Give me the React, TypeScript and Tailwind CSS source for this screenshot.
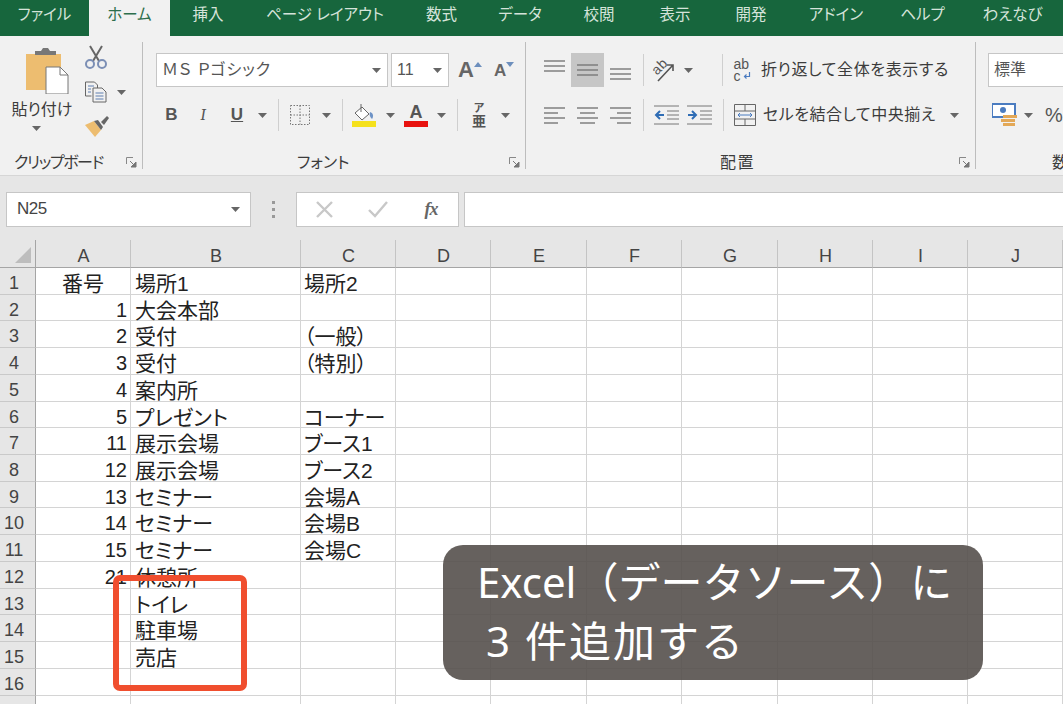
import React from 'react';

const FONT = '"Liberation Sans", "Noto Sans CJK JP", sans-serif';

const TABS = [
  { name: 'ファイル', w: 'w-[89px]' },
  { name: 'ホーム', w: 'w-[81px]', active: true },
  { name: '挿入', w: 'w-[76px]' },
  { name: 'ページ レイアウト', w: 'w-[158px]' },
  { name: '数式', w: 'w-[75px]' },
  { name: 'データ', w: 'w-[82px]' },
  { name: '校閲', w: 'w-[76px]' },
  { name: '表示', w: 'w-[76px]' },
  { name: '開発', w: 'w-[76px]' },
  { name: 'アドイン', w: 'w-[94px]' },
  { name: 'ヘルプ', w: 'w-[79px]' },
  { name: 'わえなび', w: 'w-[101px]' },
];

const COLS = ['A', 'B', 'C', 'D', 'E', 'F', 'G', 'H', 'I', 'J'];

const ROWS: [string, string, string][] = [
  ['番号', '場所1', '場所2'],
  ['1', '大会本部', ''],
  ['2', '受付', '（一般）'],
  ['3', '受付', '（特別）'],
  ['4', '案内所', ''],
  ['5', 'プレゼント', 'コーナー'],
  ['11', '展示会場', 'ブース1'],
  ['12', '展示会場', 'ブース2'],
  ['13', 'セミナー', '会場A'],
  ['14', 'セミナー', '会場B'],
  ['15', 'セミナー', '会場C'],
  ['21', '休憩所', ''],
  ['', 'トイレ', ''],
  ['', '駐車場', ''],
  ['', '売店', ''],
  ['', '', ''],
  ['', '', ''],
];

const Arrow = () => (
  <svg width="9" height="5" viewBox="0 0 9 5"><path d="M0 0h9L4.5 5z" fill="#666" /></svg>
);

const Launcher = () => (
  <svg width="11" height="11" viewBox="0 0 11 11" fill="none">
    <path d="M.5 7V.5H7" stroke="#888" />
    <path d="M4 4l5 5M10 5v5H5z" stroke="#777" fill="#777" />
  </svg>
);

const Lines = ({ rows }: { rows: [number, number, number][] }) => (
  <svg width="22" height="22" viewBox="0 0 22 22">
    {rows.map(([x1, x2, y]) => (
      <path key={`${x1}-${y}`} d={`M${x1} ${y}H${x2}`} stroke="#777" strokeWidth="1.4" />
    ))}
  </svg>
);

const Sep = () => <div className="w-px h-[32px] bg-[#cfcfcf]" />;

const Cell = ({ w, children }: { w: string; children?: React.ReactNode }) => (
  <div className={`${w} h-full flex items-center justify-center shrink-0`}>{children}</div>
);

const RibbonDivider = () => <div className="w-px h-[127px] mt-[6px] bg-[#bdbdbd] shrink-0" />;

const Group = ({ w, label, labelPad, launcher, children }: { w: string; label: string; labelPad: string; launcher?: boolean; children: React.ReactNode }) => (
  <div className={`${w} h-full flex flex-col shrink-0 overflow-hidden`}>
    <div className="h-[114px]">{children}</div>
    <div className="h-[25px] flex items-center text-[16px] leading-none text-[#3c3c3c]">
      <span className={`${labelPad} whitespace-nowrap`}>{label}</span>
      {launcher && <span className="ml-auto mr-[5px] flex"><Launcher /></span>}
    </div>
  </div>
);

const Combo = ({ w, text, className }: { w: string; text: string; className?: string }) => (
  <div className={`${w} h-[34px] bg-white border border-[#c6c6c6] flex items-center justify-between pl-[5px] pr-[6px] text-[#555] shrink-0 ${className ?? ''}`}>
    <span className="whitespace-nowrap">{text}</span>
    <Arrow />
  </div>
);

const PasteIcon = () => (
  <svg width="44" height="46" viewBox="0 0 44 46">
    <path d="M1 6h35v36H1z" fill="#edbd70" />
    <path d="M10 7V3h6l2-3h5l2 3h6v4z" fill="#777" />
    <path d="M21 19h14l8 8v19H21z" fill="#fff" stroke="#777" />
    <path d="M35 19v8h8" fill="none" stroke="#777" />
  </svg>
);

const CutIcon = () => (
  <svg width="24" height="24" viewBox="0 0 24 24" fill="none">
    <path d="M6 1l9 15M18 1L9 16" stroke="#666" strokeWidth="2" />
    <circle cx="6" cy="19" r="4" stroke="#7c8fb5" strokeWidth="2" />
    <circle cx="18" cy="19" r="4" stroke="#7c8fb5" strokeWidth="2" />
  </svg>
);

const CopyIcon = () => (
  <svg width="24" height="22" viewBox="0 0 24 22" fill="none" stroke="#666">
    <path d="M1.5 1h9l3 3v3M1.5 1v14h6" />
    <path d="M9 7h9l4 4v10H9z" fill="#f1f1f1" />
    <path d="M4 5h6M4 8h3M4 11h3M11.5 12h8M11.5 15h8M11.5 18h8" stroke="#5f7fb0" />
  </svg>
);

const BrushIcon = () => (
  <svg width="25" height="22" viewBox="0 0 25 22">
    <path d="M1 10l9-4 7 9-6 7z" fill="#edbd70" />
    <path d="M10 6l4-1 5 7-2 3z" fill="#666" />
    <path d="M17 7l6-6 2 2-5 7z" fill="#666" />
  </svg>
);

const FillIcon = () => (
  <svg width="24" height="24" viewBox="0 0 24 24">
    <path d="M3 10l7-6 7 7-7 6z" fill="#fff" stroke="#666" />
    <path d="M9 1v8" stroke="#666" />
    <path d="M18 9c3 1 4 4 2 7-2-2-3-4-2-7z" fill="#6e93c6" />
    <path d="M0 18h24v6H0z" fill="#f5e11d" />
  </svg>
);

const OrientIcon = () => (
  <svg className="overflow-visible" width="26" height="24" viewBox="0 0 26 24" fill="none">
    <text x="3" y="14" fontSize="14" fill="#555" transform="rotate(-45 10 10)" style={{ fontFamily: FONT }}>ab</text>
    <path d="M9 23L24 7M18 7h6v6" stroke="#555" strokeWidth="1.6" />
  </svg>
);

const WrapIcon = () => (
  <div className="flex flex-col text-[14px] leading-[12px] text-[#555] tracking-normal">
    <span>ab</span>
    <span className="flex items-center">
      c
      <svg className="ml-[2px]" width="8" height="8" viewBox="0 0 8 8" fill="none">
        <path d="M6.5 0v4.5H1.5M3.5 2.5l-2 2 2 2" stroke="#4b7cc0" strokeWidth="1.2" />
      </svg>
    </span>
  </div>
);

const MergeIcon = () => (
  <svg width="22" height="22" viewBox="0 0 22 22" fill="none">
    <path d="M.5.5h21v21H.5zM.5 7h21M.5 15h21M11 .5V7M11 15v6.5" stroke="#666" />
    <path d="M4 11h14" stroke="#4b7cc0" />
    <path d="M6 9l-2 2 2 2M16 9l2 2-2 2" stroke="#4b7cc0" />
  </svg>
);

const IndentIcon = ({ right }: { right?: boolean }) => (
  <svg width="25" height="20" viewBox="0 0 25 20" fill="none">
    <path d="M0 1h25M0 19h25M13 6h12M13 10h12M13 14h12" stroke="#777" />
    {right ? (
      <path d="M1 10h7M5 6l4 4-4 4" stroke="#2f6db5" strokeWidth="2" />
    ) : (
      <path d="M10 10H3M6 6l-4 4 4 4" stroke="#2f6db5" strokeWidth="2" />
    )}
  </svg>
);

const MoneyIcon = () => (
  <svg width="26" height="24" viewBox="0 0 26 24">
    <path d="M0 1h23v13H0z" fill="#fff" stroke="#4b7cc0" strokeWidth="2" />
    <circle cx="11" cy="7" r="3" fill="#4b7cc0" />
    <path d="M11 12h14v3H11zM9 16h14v3H9zM11 20h12v3H11z" fill="#e3a857" />
  </svg>
);

export default function App() {
  return (
    <div className="relative w-[1063px] h-[704px] overflow-hidden bg-white [font-feature-settings:'palt']" style={{ fontFamily: FONT }}>
      {/* Tabs */}
      <div className="flex h-[36px] bg-[#17663d]">
        {TABS.map(t => (
          <div
            key={t.name}
            className={`${t.w} shrink-0 flex items-center justify-center pb-[6px] text-[15.5px] whitespace-nowrap ${t.active ? 'bg-[#f1f1f1] text-[#2d6e4c]' : 'text-[#d5e3da]'}`}
          >
            {t.name}
          </div>
        ))}
      </div>

      {/* Ribbon */}
      <div className="flex h-[140px] bg-[#f1f1f1] border-b border-[#d6d6d6]">
        <Group w="w-[142px]" label="クリップボード" labelPad="pl-[14px] tracking-[-1.4px]" launcher>
          <div className="flex">
            <div className="w-[84px] flex flex-col items-center pt-[12px]">
              <div className="ml-[10px]"><PasteIcon /></div>
              <span className="text-[16px] leading-none mt-[8px] text-[#3c3c3c] whitespace-nowrap">貼り付け</span>
              <div className="mt-[8px] -ml-[12px] flex"><Arrow /></div>
            </div>
            <div className="flex flex-col pt-[9px] gap-[12px]">
              <CutIcon />
              <div className="flex items-center gap-[9px]"><CopyIcon /><Arrow /></div>
              <BrushIcon />
            </div>
          </div>
        </Group>
        <RibbonDivider />

        <Group w="w-[382px]" label="フォント" labelPad="pl-[154px]" launcher>
          <div className="flex items-center pt-[17px] pl-[13px] text-[16px]">
            <Combo w="w-[232px] tracking-[1px]" text="ＭＳ Ｐゴシック" />
            <Combo w="w-[58px]" text="11" className="ml-[3px]" />
            <span className="ml-[9px] text-[22px] leading-none font-bold text-[#666]">A</span>
            <svg className="mb-[12px]" width="8" height="5" viewBox="0 0 8 5"><path d="M0 5h8L4 0z" fill="#6d8fbd" /></svg>
            <span className="ml-[12px] text-[17px] leading-none font-bold text-[#666]">A</span>
            <svg className="mb-[12px]" width="8" height="5" viewBox="0 0 8 5"><path d="M0 0h8L4 5z" fill="#6d8fbd" /></svg>
          </div>
          <div className="flex items-center h-[34px] mt-[11px] pl-[13px] text-[#555]">
            <Cell w="w-[31px]"><b className="text-[17px]">B</b></Cell>
            <Cell w="w-[32px]"><i className="text-[17px] font-serif">I</i></Cell>
            <Cell w="w-[36px]"><b className="text-[17px] underline">U</b></Cell>
            <Cell w="w-[15px]"><Arrow /></Cell>
            <Cell w="w-[8px]" />
            <Sep />
            <Cell w="w-[42px]">
              <svg width="20" height="20" viewBox="0 0 20 20" fill="none" stroke="#777" strokeDasharray="1.5 1.5">
                <path d="M.5.5h19v19H.5zM.5 10h19M10 .5v19" />
              </svg>
            </Cell>
            <Cell w="w-[10px]"><Arrow /></Cell>
            <Cell w="w-[11px]" />
            <Sep />
            <Cell w="w-[41px]"><FillIcon /></Cell>
            <Cell w="w-[12px]"><Arrow /></Cell>
            <Cell w="w-[40px]">
              <div className="flex flex-col items-center w-[24px]">
                <b className="text-[18px] leading-[18px]">A</b>
                <div className="w-full h-[6px] bg-[#e8120f]" />
              </div>
            </Cell>
            <Cell w="w-[10px]"><Arrow /></Cell>
            <Cell w="w-[11px]" />
            <Sep />
            <Cell w="w-[42px]">
              <div className="flex flex-col items-center leading-none font-bold">
                <span className="text-[11px]">ア</span>
                <span className="text-[14px]">亜</span>
              </div>
            </Cell>
            <Cell w="w-[10px]"><Arrow /></Cell>
          </div>
        </Group>
        <RibbonDivider />

        <Group w="w-[449px]" label="配置" labelPad="pl-[194px] tracking-[1.5px]" launcher>
          <div className="flex items-center h-[34px] mt-[17px] pl-[18px] text-[16px] tracking-[0.6px] text-[#3c3c3c]">
            <Cell w="w-[22px]"><Lines rows={[[0, 21, 2], [0, 21, 7], [0, 21, 12]]} /></Cell>
            <Cell w="w-[5px]" />
            <Cell w="w-[33px]">
              <div className="w-full h-full bg-[#c6c6c6] flex items-center justify-center">
                <Lines rows={[[0, 21, 6], [0, 21, 11], [0, 21, 16]]} />
              </div>
            </Cell>
            <Cell w="w-[33px]"><Lines rows={[[0, 21, 10], [0, 21, 15], [0, 21, 20]]} /></Cell>
            <Cell w="w-[6px]" />
            <Sep />
            <Cell w="w-[36px]"><OrientIcon /></Cell>
            <Cell w="w-[16px]"><Arrow /></Cell>
            <Cell w="w-[26px]" />
            <Sep />
            <Cell w="w-[38px]"><WrapIcon /></Cell>
            <span className="whitespace-nowrap">折り返して全体を表示する</span>
          </div>
          <div className="flex items-center h-[34px] mt-[11px] pl-[18px] text-[16px] tracking-[0.5px] text-[#3c3c3c]">
            <Cell w="w-[22px]"><Lines rows={[[0, 21, 4], [0, 14, 9], [0, 21, 14], [0, 14, 19]]} /></Cell>
            <Cell w="w-[43px]"><Lines rows={[[0, 21, 4], [3, 18, 9], [0, 21, 14], [3, 18, 19]]} /></Cell>
            <Cell w="w-[23px]"><Lines rows={[[0, 21, 4], [7, 21, 9], [0, 21, 14], [7, 21, 19]]} /></Cell>
            <Cell w="w-[11px]" />
            <Sep />
            <Cell w="w-[10px]" />
            <IndentIcon />
            <Cell w="w-[8px]" />
            <IndentIcon right />
            <Cell w="w-[11px]" />
            <Sep />
            <Cell w="w-[10px]" />
            <MergeIcon />
            <Cell w="w-[7px]" />
            <span className="w-[187px] whitespace-nowrap">セルを結合して中央揃え</span>
            <Arrow />
          </div>
        </Group>
        <RibbonDivider />

        <Group w="w-[87px]" label="数" labelPad="pl-[76px]">
          <div className="h-[34px] mt-[17px] ml-[12px] pl-[5px] flex items-center bg-white border border-r-0 border-[#c6c6c6] text-[16px] text-[#555]">標準</div>
          <div className="flex items-center h-[34px] mt-[11px] pl-[16px]">
            <MoneyIcon />
            <Cell w="w-[20px]"><Arrow /></Cell>
            <span className="ml-[7px] text-[20px] text-[#555]">%</span>
          </div>
        </Group>
      </div>

      {/* Formula bar */}
      <div className="flex items-center h-[64px] pt-[2px] bg-[#e6e6e6]">
        <div className="ml-[6px] w-[245px] h-[35px] bg-white border border-[#c6c6c6] flex items-center justify-between pl-[10px] pr-[10px] text-[17px] text-[#444] shrink-0">
          <span className="tracking-[-0.5px]">N25</span>
          <Arrow />
        </div>
        <div className="w-[45px] flex flex-col items-center gap-[4px] shrink-0">
          <span className="w-[3px] h-[3px] bg-[#999]" />
          <span className="w-[3px] h-[3px] bg-[#999]" />
          <span className="w-[3px] h-[3px] bg-[#999]" />
        </div>
        <div className="w-[163px] h-[35px] bg-white border border-[#c6c6c6] flex items-center shrink-0">
          <Cell w="w-[54px]">
            <svg width="17" height="17" viewBox="0 0 17 17"><path d="M1 1l15 15M16 1L1 16" stroke="#c8c8c8" strokeWidth="2.4" /></svg>
          </Cell>
          <Cell w="w-[54px]">
            <svg width="20" height="17" viewBox="0 0 20 17" fill="none"><path d="M1 9l6 6L19 1" stroke="#c8c8c8" strokeWidth="2.4" /></svg>
          </Cell>
          <Cell w="w-[52px]"><i className="text-[18px] font-bold text-[#666] tracking-[-1px]" style={{ fontFamily: '"Liberation Serif", serif' }}>fx</i></Cell>
        </div>
        <div className="ml-[5px] flex-1 h-[35px] bg-white border border-r-0 border-[#c6c6c6]" />
      </div>

      {/* Sheet */}
      <div className="grid grid-cols-[36px_95px_170px_95px_95px_96px_95px_96px_95px_95px_95px] grid-rows-[28px] auto-rows-[26.72px] text-[21px] leading-[31px] text-[#222]">
        <div className="bg-[#e6e6e6] border-r border-b border-[#a5a5a5] flex items-end justify-end pr-[4px] pb-[4px]">
          <svg width="16" height="16" viewBox="0 0 16 16"><path d="M16 0v16H0z" fill="#bdbdbd" /></svg>
        </div>
        {COLS.map(c => (
          <div key={c} className="bg-[#e6e6e6] border-r border-b border-r-[#c4c4c4] border-b-[#a5a5a5] text-center text-[18px] leading-[33px] text-[#444] pl-[1px]">{c}</div>
        ))}
        {ROWS.map((r, i) => (
          <React.Fragment key={i}>
            <div className="bg-[#e6e6e6] border-r border-b border-r-[#a5a5a5] border-b-[#c9c9c9] text-[18px] text-[#444] text-center pr-[7px]">{i < 16 ? i + 1 : ''}</div>
            <div className={`border-r border-b border-[#d4d4d4] whitespace-nowrap ${i === 0 ? 'text-center' : 'text-right pr-[3px] text-[20px]'}`}>{r[0]}</div>
            <div className="border-r border-b border-[#d4d4d4] pl-[4px] whitespace-nowrap">{r[1]}</div>
            <div className="border-r border-b border-[#d4d4d4] pl-[3px] whitespace-nowrap">{r[2]}</div>
            {COLS.slice(3).map(c => (
              <div key={c} className="border-r border-b border-[#d4d4d4]" />
            ))}
          </React.Fragment>
        ))}
      </div>

      {/* Callouts */}
      <div className="absolute left-[113px] top-[575px] w-[134px] h-[116px] border-[6px] border-[#f04e2e] rounded-[7px]" />
      <div
        className="absolute left-[443px] top-[545px] w-[540px] h-[135px] rounded-[20px] bg-[#55504c]/90 pl-[34px] pt-[7px] text-white text-[42px] leading-[59px] whitespace-nowrap [font-feature-settings:normal]"
        style={{ fontFamily: '"Noto Sans", "Noto Sans CJK JP", sans-serif' }}
      >
        <div>Excel（データソース）に</div>
        <div className="pl-[9px] tracking-[2px]">3 件追加する</div>
      </div>
    </div>
  );
}
